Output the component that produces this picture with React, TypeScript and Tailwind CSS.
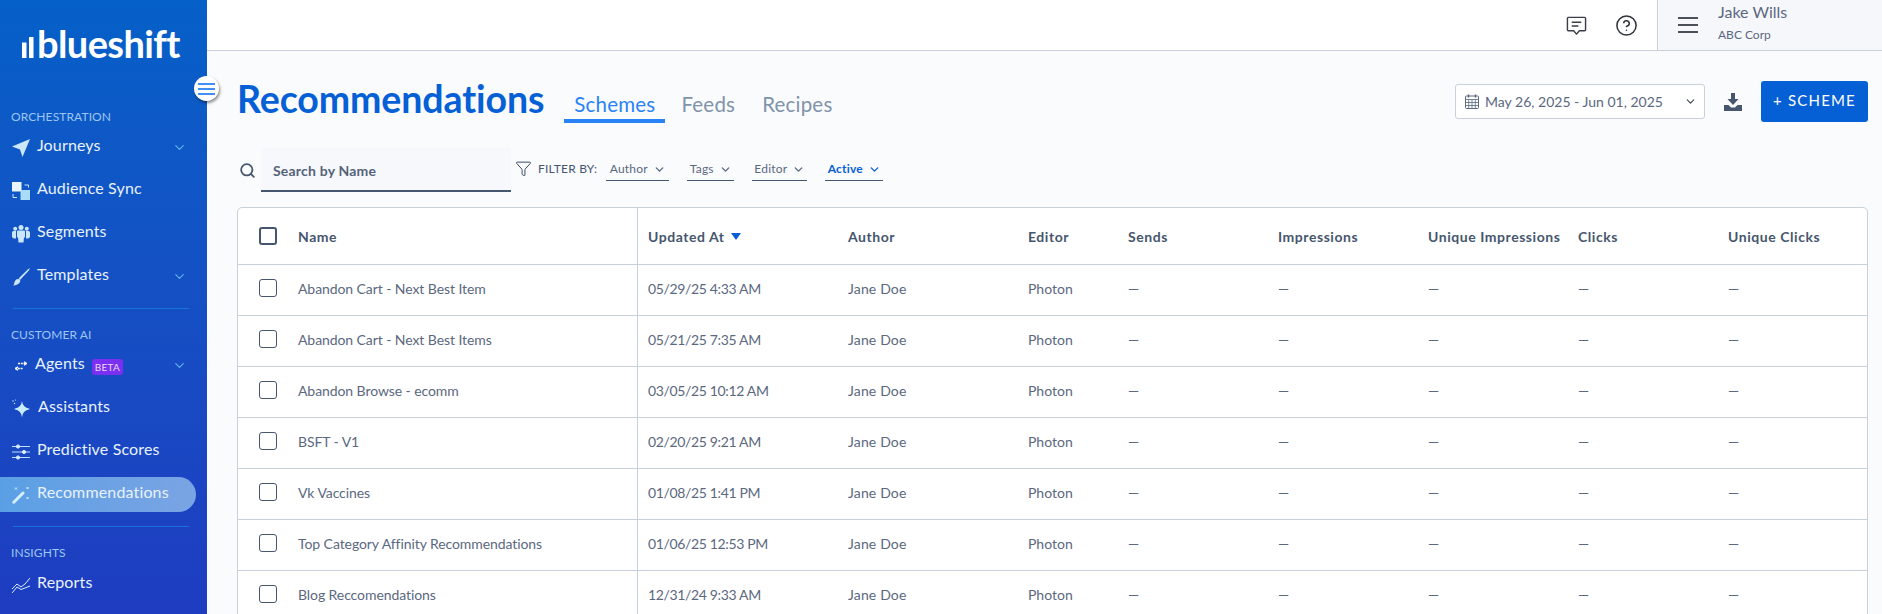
import React from "react";
import { ChevronDown, CircleHelp, Search, Funnel } from "lucide-react";

const ic = "w-[18px] h-[18px] text-[#c9e6fb] shrink-0";

const Plane = () => (
  <svg viewBox="0 0 18 18" className={ic} fill="currentColor"><path d="M0 7.500 18 0 10.500 18 8 10.500z" /></svg>
);
const Sync = () => (
  <svg viewBox="0 0 18 18" className={ic}>
    <rect x="0" y="0" width="9.500" height="9.500" fill="#eaf5fd" />
    <rect x="8.500" y="8" width="9.500" height="10" fill="#a9dcf8" />
    <path d="M12.500 3h4v2.500M1 12v3.500h4" fill="none" stroke="#c9e6fb" strokeWidth="1" />
  </svg>
);
const Users = () => (
  <svg viewBox="0 0 18 18" className={ic} fill="currentColor">
    <circle cx="3.200" cy="3.800" r="2" /><circle cx="9" cy="2.500" r="2.500" /><circle cx="14.800" cy="3.800" r="2" />
    <path d="M0 7.500q0-1.500 1.500-1.500h2.500v7.500H1.500L1 12.500H0z" />
    <path d="M18 7.500q0-1.500-1.500-1.500H14v7.500h2.500l.5-1h1z" />
    <path d="M5 6.500q0-1 1-1h6q1 0 1 1v6h-1l-.5 5h-5l-.5-5H5z" />
  </svg>
);
const Brush = () => (
  <svg viewBox="0 0 18 18" className={ic} fill="currentColor">
    <path d="M18 0 7.500 9.500 9 11 18 .5z M16.500 .8 6.800 10.200 8 12 17.300 2z" />
    <path d="M6 11c2-.3 2.800 1.500 2 3-1 2-4 3.500-7 3.500 1.500-1 .8-2.500 2-4.500.6-1.200 1.800-1.900 3-2z" />
  </svg>
);
const AgentArrows = () => (
  <svg viewBox="0 0 12 10" className="w-[12px] h-[10px] text-white shrink-0" fill="none" stroke="currentColor" strokeWidth="1.300" strokeDasharray="2 .8">
    <path d="M3 2.500h8M0 7.500h8" />
    <path d="M9 .7 11.500 2.500 9 4.300M3 5.700.5 7.500 3 9.300" strokeDasharray="none" />
  </svg>
);
const Sparkle = () => (
  <svg viewBox="0 0 20 20" className="w-[20px] h-[20px] text-[#c9ecfd] shrink-0" fill="currentColor">
    <path d="M11 2c.7 4.500 2.500 6.300 8 8-5.500 1.700-7.300 3.500-8 8.500-.7-5-2.500-6.800-8-8.500 5.500-1.700 7.300-3.500 8-8z" />
    <circle cx="2" cy="2" r=".7" /><circle cx="4.500" cy="1" r=".6" /><circle cx="3.500" cy="4.500" r=".7" />
  </svg>
);
const Sliders = () => (
  <svg viewBox="0 0 18 16" className={ic} fill="#d8effc" stroke="#d8effc" strokeWidth="1">
    <path d="M0 2.500h18M0 8h18M0 13.500h18" strokeWidth=".9" />
    <circle cx="6" cy="2.500" r="1.600" /><circle cx="12" cy="8" r="1.600" /><circle cx="6" cy="13.500" r="1.600" />
  </svg>
);
const Wand = () => (
  <svg viewBox="0 0 18 18" className={ic} fill="none" stroke="#d6eefb">
    <path d="M1.800 16.200 11 7" strokeWidth="3" strokeLinecap="round" />
    <path d="M3 1.500l2 2M5 1.500l-2 2M14.500 1l2 2M16.500 1l-2 2M14.500 11l2 2M16.500 11l-2 2" strokeWidth="1" />
  </svg>
);
const Chart = () => (
  <svg viewBox="0 0 18 16" className={ic} fill="none" stroke="#d8effc" strokeWidth="1">
    <path d="M0 12 5 7l4 3 4-3 5-6" />
    <path d="M0 16l5-6 4 2.500 4-1.500 5-2" />
  </svg>
);

function NavItem({ icon, label, chevron, active, extra, gap = "gap-[7px]" }: { icon: React.ReactNode; label: string; chevron?: boolean; active?: boolean; extra?: React.ReactNode; gap?: string }) {
  return (
    <div className={`relative flex items-center h-[35px] mt-[8px] pl-[12px] pr-[10px] mr-[11px] rounded-r-[18px] ${gap} ${active ? "bg-gradient-to-r from-[#5a9fe4] to-[#7aa4e4]" : ""}`}>
      <span className="w-[18px] flex justify-center shrink-0">{icon}</span>
      <span className="-mt-[5px] text-[16px] text-[#e8f2fc] leading-none whitespace-nowrap tracking-[0.15px]">{label}</span>
      {extra}
      {chevron && <ChevronDown className="absolute right-[9px] top-[10px] w-[15px] h-[15px] text-[#62b5f0]" strokeWidth={1.800} />}
    </div>
  );
}

const SectionLabel = ({ children, className = "" }: { children: string; className?: string }) => (
  <div className={`pl-[11px] text-[12px] leading-[14px] text-[#9cc6f2] tracking-[0.1px] ${className}`}>{children}</div>
);
const Divider = ({ className = "" }: { className?: string }) => <div className={`ml-[13px] w-[176px] h-px bg-[#1a72e0] ${className}`} />;

function Sidebar() {
  return (
    <aside className="w-[207px] h-full shrink-0 bg-gradient-to-b from-[#0560c8] to-[#1e3cc0] overflow-hidden">
      <div className="flex items-end h-[58px] pl-[22px] text-white">
        <svg viewBox="0 0 12 21" className="w-[12px] h-[21px] mr-[3px]" fill="currentColor">
          <rect x="0" y="5.500" width="4.500" height="15.500" /><rect x="7" y="0" width="4.500" height="21" />
        </svg>
        <span className="text-[38px] leading-[32px] h-[31px] font-bold tracking-[-0.6px]">blueshift</span>
      </div>
      <SectionLabel className="mt-[52px]">ORCHESTRATION</SectionLabel>
      <div className="-mt-[2px]">
        <NavItem icon={<Plane />} label="Journeys" chevron />
        <NavItem icon={<Sync />} label="Audience Sync" />
        <NavItem icon={<Users />} label="Segments" />
        <NavItem icon={<Brush />} label="Templates" chevron />
      </div>
      <Divider className="mt-[14px]" />
      <SectionLabel className="mt-[19px]">CUSTOMER AI</SectionLabel>
      <div className="-mt-[2px]">
        <NavItem icon={<AgentArrows />} label="Agents" chevron gap="gap-[5px]"
          extra={<span className="ml-[2px] mt-[2px] px-[3px] h-[16px] leading-[16px] rounded-[3px] bg-[#7b2ff0] text-[#e8dcff] text-[10px] tracking-[0.2px]">BETA</span>} />
        <NavItem icon={<Sparkle />} label="Assistants" gap="gap-[8px]" />
        <NavItem icon={<Sliders />} label="Predictive Scores" />
        <NavItem icon={<Wand />} label="Recommendations" active />
      </div>
      <Divider className="mt-[14px]" />
      <SectionLabel className="mt-[19px]">INSIGHTS</SectionLabel>
      <div className="-mt-[1px]">
        <NavItem icon={<Chart />} label="Reports" />
      </div>
    </aside>
  );
}

function Header() {
  return (
    <header className="h-[51px] shrink-0 flex justify-end bg-white border-b border-[#c8d0dc]">
      <div className="flex items-center gap-[28px] pr-[19px]">
        <svg viewBox="0 0 22 22" className="w-[21px] h-[21px] text-[#3a3f47]" fill="none" stroke="currentColor" strokeWidth="1.500" strokeLinejoin="round">
          <path d="M2.500 2.500h17a1 1 0 0 1 1 1v12a1 1 0 0 1-1 1h-5.500L11 20l-3-3.500H2.500a1 1 0 0 1-1-1v-12a1 1 0 0 1 1-1z" />
          <path d="M6 7.500h10M6 11.500h7" />
        </svg>
        <CircleHelp className="w-[23px] h-[23px] text-[#2f343b]" strokeWidth={1.600} />
      </div>
      <div className="w-[225px] flex items-center bg-[#f6f7fb] border-l border-[#c8d0dc] pl-[20px]">
        <div className="flex flex-col gap-[5px] w-[20px]">
          <span className="h-[2px] bg-[#4a4f58]" /><span className="h-[2px] bg-[#4a4f58]" /><span className="h-[2px] bg-[#4a4f58]" />
        </div>
        <div className="ml-[20px] -mt-[5px] text-[#5b6880]">
          <div className="text-[16px] leading-[20px]">Jake Wills</div>
          <div className="text-[12px] leading-[16px] mt-[5px]">ABC Corp</div>
        </div>
      </div>
    </header>
  );
}

function TitleRow() {
  return (
    <div className="flex items-start pl-[30px] pr-[14px] pt-[28px] h-[97px] shrink-0">
      <h1 className="text-[37.500px] leading-[40px] font-bold text-[#0560d6] tracking-[-0.1px]">Recommendations</h1>
      <div className="flex ml-[20px] mt-[8px] text-[20.500px] leading-[24px] tracking-[0.2px]">
        <div className="px-[10px] pb-[7px] h-[36px] pt-[5px] border-b-[4px] border-[#2a83f6] text-[#2a83f6]">Schemes</div>
        <div className="px-[16px] pt-[5px] text-[#7f93ab]">Feeds</div>
        <div className="px-[11px] pt-[5px] text-[#7f93ab]">Recipes</div>
      </div>
      <div className="ml-auto mt-[2px] flex items-center">
        <div className="flex items-center w-[250px] h-[35px] border border-[#c8d0dc] rounded-[3px] bg-white pl-[9px] pr-[7px] text-[#5b6880]">
          <svg viewBox="0 0 14 15" className="w-[14px] h-[15px]" fill="none" stroke="currentColor" strokeWidth="1">
            <rect x=".5" y="2" width="13" height="12.500" rx="1" />
            <path d="M.5 5.500h13M.5 8.500h13M.5 11.500h13M3.700 5.500v9M7 5.500v9M10.300 5.500v9" strokeWidth=".8" />
            <path d="M3.500 .5v3M10.500 .5v3" strokeWidth="1.500" />
          </svg>
          <span className="ml-[6px] text-[14px]">May 26, 2025 - Jun 01, 2025</span>
          <ChevronDown className="ml-auto w-[13px] h-[13px] text-[#3d4654]" strokeWidth={2} />
        </div>
        <svg viewBox="0 0 18 18" className="ml-[19px] w-[18px] h-[18px] text-[#46566e]" fill="currentColor">
          <path d="M7 0h4v6h3.500L9 12 3.500 6H7z" />
          <path d="M0 12h4.500L7 14.500h4L13.500 12H18v6H0z" />
        </svg>
        <div className="ml-[19px] w-[107px] h-[41px] pb-[2px] rounded-[3px] bg-[#0560d6] text-white text-[15px] tracking-[1.200px] flex items-center justify-center">+ SCHEME</div>
      </div>
    </div>
  );
}

const FilterPill = ({ label, w, active }: { label: string; w: string; active?: boolean }) => (
  <div className={`${w} h-[23px] flex items-center gap-[5px] justify-center border-b border-[#46566e] text-[12px] tracking-[0.2px] ${active ? "text-[#0560d6] font-bold border-[#0560d6]" : "text-[#5b6880]"}`}>
    {label}
    <ChevronDown className="w-[13px] h-[13px]" strokeWidth={2.500} />
  </div>
);

function FilterRow() {
  return (
    <div className="flex items-center h-[44px] shrink-0">
      <Search className="ml-[32px] w-[17px] h-[17px] text-[#46566e]" strokeWidth={2.500} />
      <div className="ml-[5px] w-[250px] h-[44px] bg-[#f6f8fc] border-b-2 border-[#46566e] pl-[12px] pt-[2px] flex items-center text-[14px] font-bold text-[#55637a] tracking-[0.2px]">Search by Name</div>
      <Funnel className="ml-[4px] w-[17px] h-[17px] -mt-[3px] text-[#3a4a60]" strokeWidth={1.400} />
      <span className="ml-[6px] -mt-[2px] text-[12px] text-[#46566e] tracking-[0.2px]">FILTER BY:</span>
      <div className="flex ml-[9px] gap-[18px] -mt-[1px]">
        <FilterPill label="Author" w="w-[63px]" />
        <FilterPill label="Tags" w="w-[47px]" />
        <FilterPill label="Editor" w="w-[55px]" />
        <FilterPill label="Active" w="w-[58px]" active />
      </div>
    </div>
  );
}

const cols = "grid grid-cols-[60px_340px_210px_180px_100px_150px_150px_150px_150px_1fr]";
const names: [string, string][] = [
  ["Abandon Cart - Next Best Item", "05/29/25 4:33 AM"],
  ["Abandon Cart - Next Best Items", "05/21/25 7:35 AM"],
  ["Abandon Browse - ecomm", "03/05/25 10:12 AM"],
  ["BSFT - V1", "02/20/25 9:21 AM"],
  ["Vk Vaccines", "01/08/25 1:41 PM"],
  ["Top Category Affinity Recommendations", "01/06/25 12:53 PM"],
  ["Blog Reccomendations", "12/31/24 9:33 AM"],
];

function Table() {
  const heads = ["Author", "Editor", "Sends", "Impressions", "Unique Impressions", "Clicks", "Unique Clicks"];
  return (
    <div className="ml-[30px] mr-[14px] mt-[15px] bg-white border border-[#c8d0dc] rounded-t-[5px] text-[14px] text-[#5b6880]">
      <div className={`${cols} h-[56px] items-center font-bold text-[#46566e] tracking-[0.55px]`}>
        <div className="flex justify-center"><span className="w-[18px] h-[18px] border-2 border-[#46566e] rounded-[3px]" /></div>
        <div>Name</div>
        <div className="h-full flex items-center gap-[6px] border-l border-[#c8d0dc] pl-[10px] -ml-px -mr-px">
          Updated At <span className="w-0 h-0 border-x-[5px] border-x-transparent border-t-[7px] border-t-[#0560d6]" />
        </div>
        {heads.map((h) => <div key={h} className="whitespace-nowrap">{h}</div>)}
      </div>
      {names.map(([n, d]) => (
        <div key={n} className={`${cols} h-[51px] items-center border-t border-[#c8d0dc] [&>div]:pb-[4px]`}>
          <div className="flex justify-center"><span className="w-[18px] h-[18px] border border-[#46566e] rounded-[3px]" /></div>
          <div className="tracking-[-0.08px]">{n}</div>
          <div className="self-stretch flex items-center border-l border-[#c8d0dc] pl-[10px] -ml-px -mr-px tracking-[-0.35px]">{d}</div>
          <div className="tracking-[0.15px]">Jane Doe</div>
          <div>Photon</div>
          {[0, 1, 2, 3, 4].map((i) => <div key={i}>—</div>)}
        </div>
      ))}
    </div>
  );
}

export default function App() {
  return (
    <div className="relative flex w-[1882px] h-[614px] overflow-hidden bg-[#fafbfd] font-['Lato',sans-serif]">
      <Sidebar />
      <main className="flex-1 flex flex-col min-w-0">
        <Header />
        <TitleRow />
        <FilterRow />
        <Table />
      </main>
      <div className="absolute left-[194px] top-[76px] w-[25px] h-[25px] rounded-full bg-white shadow-[1px_2px_3px_rgba(0,0,0,0.45)] flex flex-col items-center justify-center gap-[3px]">
        <span className="w-[17px] h-[2px] bg-[#3f8ff5]" /><span className="w-[17px] h-[2px] bg-[#3f8ff5]" /><span className="w-[17px] h-[2px] bg-[#3f8ff5]" />
      </div>
    </div>
  );
}
